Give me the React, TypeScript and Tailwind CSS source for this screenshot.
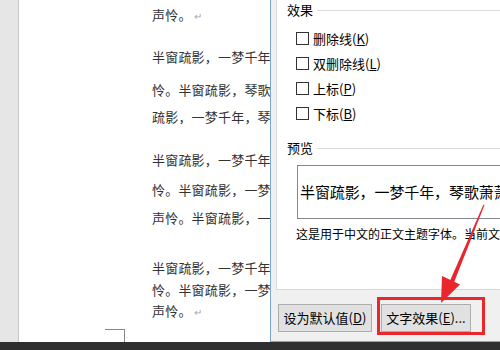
import React from 'react'

const docLines: { text: string; mt: string; mark?: boolean }[] = [
  { text: '声怜。', mt: 'mt-[5px]', mark: true },
  { text: '半窗疏影，一梦千年，琴歌萧萧', mt: 'mt-[22px]' },
  { text: '怜。半窗疏影，琴歌萧萧', mt: 'mt-[13px]' },
  { text: '疏影，一梦千年，琴歌萧萧', mt: 'mt-[7px]' },
  { text: '半窗疏影，一梦千年，琴歌萧萧', mt: 'mt-[23px]' },
  { text: '怜。半窗疏影，一梦千年', mt: 'mt-[10px]' },
  { text: '声怜。半窗疏影，一梦千年', mt: 'mt-[8px]' },
  { text: '半窗疏影，一梦千年，琴歌萧萧', mt: 'mt-[30px]' },
  { text: '怜。半窗疏影，一梦千年', mt: 'mt-[2px]' },
  { text: '声怜。', mt: 'mt-[1px]', mark: true },
]

const effects = [
  { label: '删除线', key: 'K' },
  { label: '双删除线', key: 'L' },
  { label: '上标', key: 'P' },
  { label: '下标', key: 'B' },
]

function Legend({ title }: { title: string }) {
  return (
    <div className="flex items-center h-[20px]">
      <span className="text-[13px] text-black">{title}</span>
      <div className="flex-1 h-px bg-[#dcdcdc] ml-[4px]"></div>
    </div>
  )
}

export default function App() {
  return (
    <div
      className="relative w-[500px] h-[350px] overflow-hidden flex flex-col bg-white"
      style={{ fontFamily: '"Noto Sans CJK SC", "Noto Sans", sans-serif' }}
    >
      <div className="flex h-[342px]">
        {/* left gray gutter */}
        <div className="w-[19px] shrink-0 bg-[#e6e6e6] border-r border-[#c8c8c8]"></div>

        {/* document page */}
        <div className="w-[251px] shrink-0 bg-white overflow-hidden flex flex-col">
          {docLines.map((l, i) => (
            <div
              key={i}
              className={`${l.mt} ml-[133px] h-[20px] leading-[20px] text-[13px] tracking-[0.2px] text-[#333] whitespace-nowrap`}
            >
              {l.text}
              {l.mark && <span className="text-[10px] text-[#aaa] ml-[2px]">↵</span>}
            </div>
          ))}
          <div className="mt-[8px] ml-[86px] flex items-start">
            <div className="w-[20px] h-[14px] border-t border-r border-[#888]"></div>
            <span className="text-[6px] leading-[8px] text-[#999] ml-[1px] mt-[3px]">.</span>
          </div>
        </div>

        {/* font dialog */}
        <div className="flex-1 min-w-0 overflow-hidden bg-[#f0f0f0] border-l border-b border-[#7ba6d4] flex flex-col">
          <div className="ml-[5px] h-[290px] bg-white border-l border-b border-[#d9d9d9] pl-[10px] flex flex-col">
            <Legend title="效果" />
            <div className="flex flex-col pl-[9px] mt-[9px] gap-[6px]">
              {effects.map((e) => (
                <div key={e.key} className="flex items-center h-[19px]">
                  <div className="w-[13px] h-[13px] border border-[#333] bg-white"></div>
                  <span className="ml-[4px] text-[13px] text-black">
                    {e.label}(<span className="underline">{e.key}</span>)
                  </span>
                </div>
              ))}
            </div>
            <div className="mt-[15px]">
              <Legend title="预览" />
            </div>
            <div className="ml-[10px] mt-[7px] w-[260px] h-[54px] border border-[#828790] flex items-center pl-[2px] overflow-hidden">
              <span className="text-[15px] text-black whitespace-nowrap tracking-[-0.1px]">
                半窗疏影，一梦千年，琴歌萧萧
              </span>
            </div>
            <div className="mt-[7px] ml-[9px] text-[12px] leading-[16px] text-black whitespace-nowrap">
              这是用于中文的正文主题字体。当前文档主题定义将使用哪种字体。
            </div>
          </div>

          <div className="flex items-center gap-[9px] ml-[7px] mt-[14px]">
            <div className="w-[94px] shrink-0 h-[28px] bg-[#e1e1e1] border border-[#adadad] flex items-center justify-center text-[13px] text-black whitespace-nowrap">
              设为默认值(<span className="underline">D</span>)
            </div>
            <div className="w-[90px] shrink-0 h-[28px] bg-[#e1e1e1] border border-[#adadad] flex items-center justify-center text-[13px] text-black whitespace-nowrap">
              文字效果(<span className="underline">E</span>)...
            </div>
          </div>
        </div>
      </div>

      {/* bottom taskbar edge */}
      <div className="flex-1 bg-[#2f2f2f]"></div>

      {/* red highlight annotation */}
      <div className="absolute left-[377px] top-[297px] w-[108px] h-[38px] border-[3px] border-[#e8262b] pointer-events-none"></div>
      <svg className="absolute left-0 top-0 pointer-events-none" width="500" height="350" viewBox="0 0 500 350">
        <polygon points="484.5,205 483.5,204.6 449,283 453,285" fill="#e8262b" />
        <polygon points="441,303 460,284.5 442,276" fill="#e8262b" />
      </svg>
    </div>
  )
}
